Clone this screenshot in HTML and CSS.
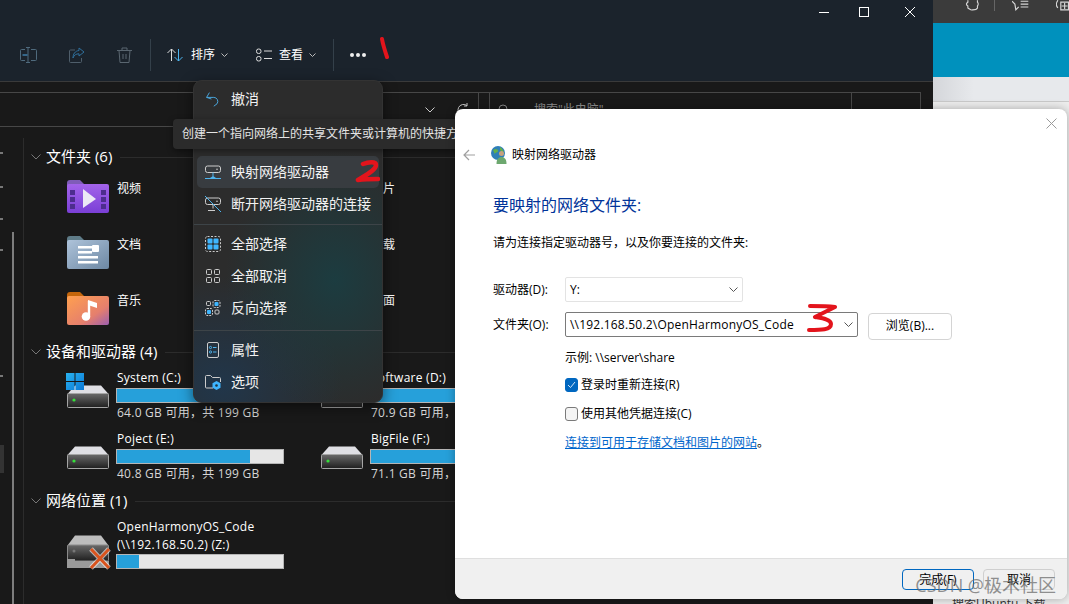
FILE: index.html
```html
<!DOCTYPE html>
<html lang="zh-CN">
<head>
    <meta charset="UTF-8">
    <meta name="viewport" content="width=device-width, initial-scale=1.0">
    <title>映射网络驱动器</title>
    <link rel="stylesheet" href="styles.css">
</head>
<body>
    <!-- shared icons -->
    <svg class="sprite" width="0" height="0">
        <defs>
            <linearGradient id="gVideo" x1="0" y1="0" x2="0" y2="1"><stop offset="0" stop-color="#a364ea"/><stop offset="1" stop-color="#7a3fd6"/></linearGradient>
            <linearGradient id="gDocs" x1="0" y1="0" x2="1" y2="1"><stop offset="0" stop-color="#aec3da"/><stop offset="1" stop-color="#6d88a3"/></linearGradient>
            <linearGradient id="gMusic" x1="0" y1="0" x2="1" y2="1"><stop offset="0" stop-color="#ffa04f"/><stop offset="0.65" stop-color="#e57f6d"/><stop offset="1" stop-color="#9c5fb0"/></linearGradient>
            <linearGradient id="gDrive" x1="0" y1="0" x2="0" y2="1"><stop offset="0" stop-color="#6a6a6a"/><stop offset="1" stop-color="#1f1f1f"/></linearGradient>
            <linearGradient id="gWin" x1="0" y1="0" x2="1" y2="1"><stop offset="0" stop-color="#29b3f0"/><stop offset="1" stop-color="#0a78d6"/></linearGradient>
            <symbol id="drive" viewBox="0 0 42 23">
                <path d="M8 .5h26l7.500 8.500h-41z" fill="#dfdfe4"/>
                <rect x=".5" y="8.500" width="41" height="14" rx="1" fill="url(#gDrive)" stroke="#a5a5a5"/>
                <circle cx="7" cy="15" r="1.600" fill="#35e03a"/>
            </symbol>
        </defs>
    </svg>

    <!-- browser window behind -->
    <div class="browser">
        <div class="browser-tabs">
            <svg class="b-puzzle" width="16" height="12" viewBox="0 0 16 12"><path d="M3 0v2C1 3 1 5 3 6v2c2 1 3 3 5 2 2 0 4 0 5-2V6c1-1 1-3 0-4V0" fill="none" stroke="#d8d8d8" stroke-width="1.200"/></svg>
            <span class="b-sep"></span>
            <svg class="b-star" width="18" height="12" viewBox="0 0 18 12"><path d="M0 1l3 3 1 6 3-3M9 1h8M9 4h8M9 7h8" fill="none" stroke="#d8d8d8" stroke-width="1.200"/></svg>
            <svg class="b-add" width="14" height="12" viewBox="0 0 14 12"><path d="M2 0C0 3 0 6 2 8M5 2h8v8H5zM9 3v6M6 6h6" fill="none" stroke="#d8d8d8" stroke-width="1.200"/></svg>
        </div>
        <div class="browser-banner"></div>
        <div class="browser-nav"></div>
        <div class="browser-page"><span class="browser-clip">搜索Ubuntu 下载</span></div>
    </div>

    <!-- explorer window -->
    <div class="explorer">
        <header class="ex-head">
            <div class="win-btns">
                <svg width="10" height="10" viewBox="0 0 10 10"><path d="M0 5.500h10" stroke="#fff"/></svg>
                <svg width="10" height="10" viewBox="0 0 10 10"><rect x=".5" y=".5" width="9" height="9" fill="none" stroke="#fff"/></svg>
                <svg width="10" height="10" viewBox="0 0 10 10"><path d="M0 0l10 10M10 0L0 10" stroke="#fff"/></svg>
            </div>
            <div class="toolbar">
                <svg class="tb-icon" width="17" height="16" viewBox="0 0 17 16"><path d="M5 2.500H1.500a1 1 0 0 0-1 1v9a1 1 0 0 0 1 1H5M11 2.500h4.500a1 1 0 0 1 1 1v9a1 1 0 0 1-1 1H11M8 .5v15M6 .5h4M6 15.500h4" fill="none" stroke="#4f6a7d"/><path d="M2.500 8h5" stroke="#3f7ea8" stroke-width="1.500"/></svg>
                <svg class="tb-icon" width="16" height="16" viewBox="0 0 16 16"><path d="M6 3H1.500a1 1 0 0 0-1 1v10.500a1 1 0 0 0 1 1h10a1 1 0 0 0 1-1V11" fill="none" stroke="#4f5e6b"/><path d="M10 1l5 4-5 4V6.800C7 6.800 5 8 4 11c0-4 2-7 6-7.500z" fill="none" stroke="#2f6f9b"/></svg>
                <svg class="tb-icon tb-last" width="15" height="16" viewBox="0 0 15 16"><path d="M0 3.500h15M5 3.500V1h5v2.500M2 3.500l1 12h9l1-12M6 7v5M9 7v5" fill="none" stroke="#5a6670"/></svg>
                <span class="tb-sep"></span>
                <div class="tb-btn sort-btn">
                    <svg width="17" height="14" viewBox="0 0 17 14"><path d="M4.500 13V1M.5 5l4-4 4 4" fill="none" stroke="#dcdcdc"/><path d="M11.500 1v12M7.500 9l4 4 4-4" fill="none" stroke="#4db4ee"/></svg>
                    <span>排序</span>
                    <svg class="chev" width="7" height="4" viewBox="0 0 7 4"><path d="M.5.5l3 3 3-3" fill="none" stroke="#bbb"/></svg>
                </div>
                <div class="tb-btn view-btn">
                    <svg width="16" height="14" viewBox="0 0 16 14"><rect x=".5" y="1" width="4.500" height="4.500" rx="2" fill="none" stroke="#ddd"/><rect x=".5" y="8.500" width="4.500" height="4.500" rx="2" fill="none" stroke="#ddd"/><path d="M8 3h8M8 10.500h8" stroke="#ddd"/></svg>
                    <span>查看</span>
                    <svg class="chev" width="7" height="4" viewBox="0 0 7 4"><path d="M.5.5l3 3 3-3" fill="none" stroke="#bbb"/></svg>
                </div>
                <span class="tb-sep sep-two"></span>
                <div class="dots"><i></i><i></i><i></i></div>
            </div>
        </header>

        <div class="address-row">
            <div class="address">
                <svg class="addr-chev" width="10" height="6" viewBox="0 0 10 6"><path d="M.5.5L5 5l4.500-4.500" fill="none" stroke="#ccc"/></svg>
                <svg class="addr-refresh" width="14" height="14" viewBox="0 0 14 14"><path d="M12 7a5.500 5.500 0 1 1-2-4.300M10 0v3H7" fill="none" stroke="#ccc"/></svg>
                <span class="addr-gap"></span>
                <div class="search">
                    <svg width="12" height="12" viewBox="0 0 12 12"><circle cx="5" cy="5" r="4" fill="none" stroke="#888"/><path d="M8 8l3.500 3.500" stroke="#888"/></svg>
                    <span>搜索"此电脑"</span>
                </div>
            </div>
        </div>

        <div class="ex-main">
            <nav class="nav-pane">
                <i class="nav-tick t1"></i><i class="nav-tick t2"></i><i class="nav-tick t3"></i><i class="nav-tick t4"></i><i class="nav-tick t5"></i>
                <i class="nav-selected"></i>
                <i class="nav-scroll"></i>
            </nav>
            <main class="content">
                <section>
                    <h3 class="sec-title"><svg width="10" height="6" viewBox="0 0 10 6"><path d="M.5.5L5 5l4.500-4.500" fill="none" stroke="#777"/></svg><span>文件夹 (6)</span></h3>
                    <div class="folders">
                        <div class="folder">
                            <svg width="42" height="33" viewBox="0 0 42 33"><path d="M0 3a3 3 0 0 1 3-3h10l4 4v6H0z" fill="#7f5cb8"/><rect y="4" width="42" height="29" rx="2" fill="url(#gVideo)"/><path d="M3 10h5v5H3zM3 17h5v5H3zM3 24h5v5H3zM34 10h5v5h-5zM34 17h5v5h-5zM34 24h5v5h-5z" fill="#4d2d8e"/><path d="M16 9l13 10-13 9z" fill="#ece8f5"/></svg>
                            <span>视频</span>
                        </div>
                        <div class="folder">
                            <svg width="42" height="33" viewBox="0 0 42 33"><path d="M0 3a3 3 0 0 1 3-3h10l4 4v6H0z" fill="#eda"/></svg>
                            <span>图片</span>
                        </div>
                        <div class="folder">
                            <svg width="42" height="33" viewBox="0 0 42 33"><path d="M0 3a3 3 0 0 1 3-3h10l4 4v6H0z" fill="#5f7c88"/><rect y="4" width="42" height="29" rx="2" fill="url(#gDocs)"/><path d="M11 10h14v2.500H11zM11 15h14v2.500H11zM11 20h20v2.500H11zM11 25h20v2.500H11z" fill="#fff"/><rect x="25" y="9" width="7" height="7" rx="1" fill="#fff"/></svg>
                            <span>文档</span>
                        </div>
                        <div class="folder">
                            <svg width="42" height="33" viewBox="0 0 42 33"><path d="M0 3a3 3 0 0 1 3-3h10l4 4v6H0z" fill="#8ab"/></svg>
                            <span>下载</span>
                        </div>
                        <div class="folder">
                            <svg width="42" height="33" viewBox="0 0 42 33"><path d="M0 3a3 3 0 0 1 3-3h10l4 4v6H0z" fill="#c4660c"/><rect y="4" width="42" height="29" rx="2" fill="url(#gMusic)"/><path d="M22 9v14.500" stroke="#fff" stroke-width="2.400"/><path d="M21 8l9 3v5l-9-3z" fill="#fff"/><circle cx="19" cy="24.500" r="4.300" fill="#fff"/></svg>
                            <span>音乐</span>
                        </div>
                        <div class="folder">
                            <svg width="42" height="33" viewBox="0 0 42 33"><path d="M0 3a3 3 0 0 1 3-3h10l4 4v6H0z" fill="#8ab"/></svg>
                            <span>桌面</span>
                        </div>
                    </div>
                </section>

                <section class="sec-drives">
                    <h3 class="sec-title"><svg width="10" height="6" viewBox="0 0 10 6"><path d="M.5.5L5 5l4.500-4.500" fill="none" stroke="#777"/></svg><span>设备和驱动器 (4)</span></h3>
                    <div class="drives">
                        <div class="drive">
                            <div class="drive-icon">
                                <svg class="win-logo" width="18" height="17" viewBox="0 0 18 17"><path d="M0 0h8.500v8H0zM9.500 0H18v8H9.500zM0 9h8.500v8H0zM9.500 9H18v8H9.500z" fill="url(#gWin)"/></svg>
                                <svg width="42" height="23"><use href="#drive"/></svg>
                            </div>
                            <div class="drive-info">
                                <div class="drive-name">System (C:)</div>
                                <div class="bar"><div class="bar-fill" style="width:68%"></div></div>
                                <div class="drive-free">64.0 GB 可用，共 199 GB</div>
                            </div>
                        </div>
                        <div class="drive">
                            <div class="drive-icon"><svg width="42" height="23"><use href="#drive"/></svg></div>
                            <div class="drive-info">
                                <div class="drive-name">Software (D:)</div>
                                <div class="bar"><div class="bar-fill" style="width:64%"></div></div>
                                <div class="drive-free">70.9 GB 可用，共 199 GB</div>
                            </div>
                        </div>
                        <div class="drive">
                            <div class="drive-icon"><svg width="42" height="23"><use href="#drive"/></svg></div>
                            <div class="drive-info">
                                <div class="drive-name">Poject (E:)</div>
                                <div class="bar"><div class="bar-fill" style="width:80%"></div></div>
                                <div class="drive-free">40.8 GB 可用，共 199 GB</div>
                            </div>
                        </div>
                        <div class="drive">
                            <div class="drive-icon"><svg width="42" height="23"><use href="#drive"/></svg></div>
                            <div class="drive-info">
                                <div class="drive-name">BigFile (F:)</div>
                                <div class="bar"><div class="bar-fill" style="width:64%"></div></div>
                                <div class="drive-free">71.1 GB 可用，共 199 GB</div>
                            </div>
                        </div>
                    </div>
                </section>

                <section class="sec-network">
                    <h3 class="sec-title"><svg width="10" height="6" viewBox="0 0 10 6"><path d="M.5.5L5 5l4.500-4.500" fill="none" stroke="#777"/></svg><span>网络位置 (1)</span></h3>
                    <div class="drive net-drive">
                        <div class="drive-icon">
                            <svg width="45" height="35" viewBox="0 0 45 35"><path d="M8 .5h26l7.500 10h-41z" fill="#bdbdbd"/><rect x=".5" y="10" width="41" height="16" rx="1" fill="url(#gDrive)" stroke="#8a8a8a"/><circle cx="7" cy="16" r="1.500" fill="#777"/><path d="M0 24h8v9H0zM8 26h34v7H8z" fill="#9a9a9a"/><path d="M24 14l18 19M42 14L24 33" stroke="#fff" stroke-opacity=".6" stroke-width="5"/><path d="M24 14l18 19M42 14L24 33" stroke="#d9541e" stroke-width="3"/></svg>
                        </div>
                        <div class="drive-info">
                            <div class="drive-name">OpenHarmonyOS_Code<br>(\\192.168.50.2) (Z:)</div>
                            <div class="bar"><div class="bar-fill" style="width:13%"></div></div>
                        </div>
                    </div>
                </section>
            </main>
        </div>

        <!-- more menu -->
        <div class="menu">
            <div class="menu-item">
                <svg width="20" height="18" viewBox="0 0 20 18"><path d="M2 7h9a5 5 0 0 1 4 8l-4 3M5.500 1L2 7l6 2" fill="none" stroke="#4aa8e0" stroke-width="1.200"/></svg>
                <span>撤消</span>
            </div>
            <div class="menu-spacer"></div>
            <div class="menu-item active">
                <svg width="16" height="16" viewBox="0 0 16 16"><rect x=".5" y="2" width="15" height="6.500" rx="2" fill="none" stroke="#ccc"/><circle cx="12" cy="5.200" r=".8" fill="#ccc"/><path d="M8 8.500v4M0 14.500h16" stroke="#4db4ee"/><path d="M5 14l3-2 3 2z" fill="#4db4ee"/></svg>
                <span>映射网络驱动器</span>
            </div>
            <div class="menu-item">
                <svg width="16" height="16" viewBox="0 0 16 16"><rect x=".5" y="2" width="15" height="6.500" rx="2" fill="none" stroke="#ccc"/><circle cx="12" cy="5.200" r=".8" fill="#ccc"/><path d="M8 8.500v4M3 14.500h7" stroke="#ccc"/><path d="M0 0l16 16" stroke="#4db4ee"/></svg>
                <span>断开网络驱动器的连接</span>
            </div>
            <div class="menu-line"></div>
            <div class="menu-item">
                <svg width="16" height="16" viewBox="0 0 16 16"><rect x=".5" y=".5" width="15" height="15" rx="2" fill="none" stroke="#ccc" stroke-dasharray="2 1.500"/><rect x="2.500" y="2.500" width="5" height="5" rx="1" fill="#3fb6ff"/><rect x="8.500" y="2.500" width="5" height="5" rx="1" fill="#3fb6ff"/><rect x="2.500" y="8.500" width="5" height="5" rx="1" fill="#3fb6ff"/><rect x="8.500" y="8.500" width="5" height="5" rx="1" fill="#3fb6ff"/></svg>
                <span>全部选择</span>
            </div>
            <div class="menu-item">
                <svg width="16" height="16" viewBox="0 0 16 16"><rect x="1.500" y="1.500" width="5" height="5" rx="1" fill="none" stroke="#ccc"/><rect x="9.500" y="1.500" width="5" height="5" rx="1" fill="none" stroke="#ccc"/><rect x="1.500" y="9.500" width="5" height="5" rx="1" fill="none" stroke="#ccc"/><rect x="9.500" y="9.500" width="5" height="5" rx="1" fill="none" stroke="#ccc"/></svg>
                <span>全部取消</span>
            </div>
            <div class="menu-item">
                <svg width="16" height="16" viewBox="0 0 16 16"><rect x="1.500" y="1.500" width="4" height="4" rx="1" fill="none" stroke="#ccc"/><rect x="8" y="0.500" width="7" height="7" rx="1.500" fill="none" stroke="#ccc" stroke-dasharray="2 1"/><rect x="9.500" y="2" width="4" height="4" rx="1" fill="#3fb6ff"/><rect x=".5" y="8.500" width="7" height="7" rx="1.500" fill="none" stroke="#ccc" stroke-dasharray="2 1"/><rect x="2" y="10" width="4" height="4" rx="1" fill="#3fb6ff"/><rect x="10" y="10" width="4" height="4" rx="1" fill="none" stroke="#ccc"/></svg>
                <span>反向选择</span>
            </div>
            <div class="menu-line line-low"></div>
            <div class="menu-item">
                <svg width="16" height="16" viewBox="0 0 16 16"><rect x="2.500" y=".5" width="11" height="15" rx="1.500" fill="none" stroke="#ccc"/><circle cx="5.500" cy="5.500" r="1.100" fill="none" stroke="#4db4ee"/><circle cx="5.500" cy="10" r="1.100" fill="none" stroke="#4db4ee"/><path d="M8 5.500h3.500M8 10h3.500" stroke="#4db4ee"/></svg>
                <span>属性</span>
            </div>
            <div class="menu-item">
                <svg width="16" height="16" viewBox="0 0 16 16"><path d="M8 14H1.500a1 1 0 0 1-1-1V2.500a1 1 0 0 1 1-1h4l2 2h7a1 1 0 0 1 1 1V8" fill="none" stroke="#ccc"/><path d="M11.500 7l4 2.300v4.400l-4 2.300-4-2.300V9.300z" fill="#3fb6ff"/><circle cx="11.500" cy="11.500" r="1.300" fill="#21333c"/></svg>
                <span>选项</span>
            </div>
        </div>
        <div class="tooltip">创建一个指向网络上的共享文件夹或计算机的快捷方式</div>
    </div>

    <!-- map network drive dialog -->
    <div class="dialog">
        <div class="dlg-top">
            <svg width="11" height="11" viewBox="0 0 11 11"><path d="M.5.5l10 10M10.500.5l-10 10" stroke="#9a9a9a"/></svg>
        </div>
        <div class="dlg-title">
            <svg class="dlg-back" width="12" height="12" viewBox="0 0 12 12"><path d="M12 6H1M6 1L1 6l5 5" fill="none" stroke="#9f9f9f" stroke-width="1.200"/></svg>
            <svg class="dlg-globe" width="16" height="18" viewBox="0 0 16 18"><circle cx="7" cy="7" r="7" fill="#2f7fb8"/><path d="M2 4c3-2 5-1 5 1s-3 1-3 3 2 3 2 5M9 1c2 1 3 3 4 5-2 0-3-1-4-2z" fill="#63b04a"/><circle cx="10.500" cy="7.500" r="2.500" fill="#c9a27c"/><path d="M5.500 18c0-5 2-7 5-7s5 2 5 7z" fill="#6da86f"/></svg>
            <span>映射网络驱动器</span>
        </div>
        <div class="dlg-body">
            <h2 class="dlg-heading">要映射的网络文件夹:</h2>
            <p class="dlg-text">请为连接指定驱动器号，以及你要连接的文件夹:</p>
            <div class="form-row row-drive">
                <label class="form-label">驱动器(D):</label>
                <div class="select select-drive">
                    <span>Y:</span>
                    <svg width="9" height="5" viewBox="0 0 9 5"><path d="M.5.5l4 4 4-4" fill="none" stroke="#555"/></svg>
                </div>
            </div>
            <div class="form-row row-folder">
                <label class="form-label">文件夹(O):</label>
                <div class="select select-folder">
                    <span class="path-text">\\192.168.50.2\OpenHarmonyOS_Code</span>
                    <svg width="9" height="5" viewBox="0 0 9 5"><path d="M.5.5l4 4 4-4" fill="none" stroke="#555"/></svg>
                </div>
                <button class="btn btn-browse">浏览(B)...</button>
            </div>
            <div class="form-indent">
                <div class="example">示例: \\server\share</div>
                <div class="check-row">
                    <span class="check checked"><svg width="9" height="8" viewBox="0 0 9 8"><path d="M1 4l2.500 2.500L8 1" fill="none" stroke="#cfe4f7"/></svg></span>
                    <span>登录时重新连接(R)</span>
                </div>
                <div class="check-row second">
                    <span class="check"></span>
                    <span>使用其他凭据连接(C)</span>
                </div>
                <div class="link-row"><a class="link">连接到可用于存储文档和图片的网站</a>。</div>
            </div>
        </div>
        <div class="dlg-foot">
            <button class="btn btn-primary">完成(F)</button>
            <button class="btn">取消</button>
        </div>
        <div class="watermark">CSDN @极术社区</div>
    </div>

    <!-- red pen marks on top of the screenshot -->
    <svg class="pen pen-one" width="10" height="22" viewBox="0 0 10 22"><path d="M3 2c1 6 3 12 5 18" fill="none" stroke="#e3141c" stroke-width="4" stroke-linecap="round"/></svg>
    <svg class="pen pen-two" width="26" height="24" viewBox="0 0 26 24"><path d="M9 4c5-2 13-3 13 1 0 5-10 10-18 15 7-1 14-1 20-1" fill="none" stroke="#e3141c" stroke-width="4.500" stroke-linecap="round" stroke-linejoin="round"/></svg>
    <svg class="pen pen-three" width="30" height="32" viewBox="0 0 30 32"><path d="M3 4c8 0 17 0 25 1-6 3-14 7-20 10 6 1 16 2 16 7 0 6-10 6-22 6" fill="none" stroke="#e3141c" stroke-width="4" stroke-linecap="round" stroke-linejoin="round"/></svg>
</body>
</html>
```
FILE: styles.css
```css
* {
    box-sizing: border-box;
}

html, body {
    width: 1069px;
    height: 604px;
    margin: 0;
    overflow: hidden;
}

body {
    position: relative;
    background-color: #191919;
    font-family: "Open Sans", "Noto Sans CJK SC", sans-serif;
    font-size: 12px;
    line-height: 18px;
}

.sprite {
    position: absolute;
}

/* browser behind */
.browser {
    position: absolute;
    left: 933px;
    top: 0;
    right: 0;
    bottom: 0;
    display: flex;
    flex-direction: column;
    background-color: #ededed;
}

.browser-tabs {
    height: 23px;
    background-color: #3b3b3b;
    display: flex;
    align-items: flex-start;
    padding-left: 32px;
    gap: 14px;
}

.b-sep {
    width: 1px;
    height: 11px;
    background-color: #666;
}

.b-star {
    margin-left: 3px;
}

.b-add {
    margin-left: 12px;
}

.browser-banner {
    height: 54px;
    background-color: #0091bd;
}

.browser-nav {
    height: 25px;
    background: linear-gradient(90deg, #d4d6da, #e7e9ec 30%);
    border-bottom: 1px solid #c9c9c9;
}

.browser-page {
    flex: 1;
    position: relative;
}

.browser-clip {
    position: absolute;
    left: 19px;
    bottom: -9px;
    color: #333;
}

/* explorer */
.explorer {
    position: absolute;
    left: 0;
    top: 0;
    width: 933px;
    height: 604px;
    display: flex;
    flex-direction: column;
    background-color: #191919;
    color: #fff;
}

.ex-head {
    height: 82px;
    background-color: #1b232c;
    border-bottom: 1px solid #3a3a3a;
    padding-top: 7px;
}

.win-btns {
    display: flex;
    justify-content: flex-end;
    padding-right: 18px;
    gap: 30px;
}

.win-btns svg:nth-child(3) {
    margin-left: 6px;
}

.toolbar {
    display: flex;
    align-items: center;
    height: 32px;
    margin-top: 22px;
    padding-left: 20px;
}

.tb-icon {
    margin-right: 32px;
}

.tb-icon.tb-last {
    margin-right: 17px;
}

.tb-sep {
    width: 1px;
    height: 32px;
    background-color: #34404a;
    margin-left: 1px;
}

.tb-btn {
    display: flex;
    align-items: center;
    gap: 7px;
}

.tb-btn .chev {
    margin-left: -1px;
}

.sort-btn {
    margin-left: 16px;
}

.view-btn {
    margin-left: 28px;
}

.sep-two {
    margin-left: 17px;
}

.dots {
    display: flex;
    gap: 2px;
    margin-left: 16px;
}

.dots i {
    width: 4px;
    height: 4px;
    border-radius: 50%;
    background-color: #eee;
}

.address-row {
    height: 45px;
    padding: 10px 12px 0 0;
}

.address {
    height: 35px;
    border: 1px solid #474747;
    border-left: none;
    display: flex;
    align-items: center;
    padding-left: 425px;
}

.addr-refresh {
    margin-left: 22px;
}

.addr-gap {
    width: 1px;
    height: 33px;
    background-color: #474747;
    margin-left: 7px;
}

.search {
    width: 363px;
    height: 33px;
    margin-left: 10px;
    border-left: 1px solid #474747;
    border-right: 1px solid #474747;
    display: flex;
    align-items: center;
    gap: 24px;
    padding-left: 8px;
    color: #8c8c8c;
}

.ex-main {
    flex: 1;
    display: flex;
    min-height: 0;
}

.nav-pane {
    width: 24px;
    position: relative;
    border-right: 1px solid #2c2c2c;
    margin-top: 11px;
}

.nav-tick {
    position: absolute;
    left: 0;
    width: 3px;
    height: 2px;
    background-color: #777;
}

.t1 { top: 14px; }
.t2 { top: 48px; }
.t3 { top: 80px; }
.t4 { top: 111px; }
.t5 { top: 237px; }

.nav-selected {
    position: absolute;
    left: 0;
    top: 307px;
    width: 4px;
    height: 28px;
    background-color: #333;
}

.nav-scroll {
    position: absolute;
    left: 12px;
    top: 94px;
    bottom: 0;
    width: 2px;
    background-color: #7d7d7d;
}

.content {
    flex: 1;
    padding: 20px 0 0 7px;
    min-width: 0;
}

.sec-title {
    display: flex;
    align-items: center;
    height: 20px;
    margin: 0;
    font-size: 15px;
    font-weight: normal;
    color: #fff;
}

.sec-title span {
    margin-top: -2px;
}

.sec-title svg {
    margin-right: 5px;
}

.sec-title::after {
    content: "";
    flex: 1;
    height: 1px;
    margin-left: 8px;
    background-color: #2c2c2c;
}

.folders {
    display: grid;
    grid-template-columns: 254px 254px;
    padding-left: 36px;
    margin-top: 5px;
}

.folder {
    height: 56px;
    display: flex;
    gap: 8px;
    padding-top: 8px;
    align-items: flex-start;
}

.sec-drives {
    margin-top: 2px;
}

.drives {
    display: grid;
    grid-template-columns: 254px 254px;
    grid-auto-rows: 61px;
    padding-left: 36px;
    margin-top: 8px;
}

.drive {
    display: flex;
    gap: 8px;
    align-items: flex-start;
}

.drive-icon {
    width: 42px;
    height: 38px;
    position: relative;
    padding-top: 15px;
    flex-shrink: 0;
}

.drive-icon svg {
    display: block;
}

.win-logo {
    position: absolute;
    left: -1px;
    top: 3px;
    z-index: 1;
}

.drive-info {
    width: 168px;
    margin-left: -1px;
}

.drive-name {
    line-height: 16px;
    margin-left: 1px;
    letter-spacing: 0.25px;
}

.bar {
    width: 168px;
    height: 15px;
    margin-top: 2px;
    background-color: #e6e6e6;
    border: 1px solid #b5b5b5;
}

.bar-fill {
    height: 100%;
    background-color: #26a0da;
}

.drive-free {
    margin-left: 1px;
    margin-top: 1px;
    color: #d6d6d6;
    letter-spacing: 0.25px;
    white-space: nowrap;
}

.sec-network {
    margin-top: -1px;
}

.net-drive {
    margin: 7px 0 0 36px;
}

.net-drive .drive-icon {
    padding-top: 17px;
}

.net-drive .drive-name {
    line-height: 18px;
}

.net-drive .bar {
    margin-top: 0;
}

/* more menu and its tooltip */
.menu {
    position: absolute;
    left: 193px;
    top: 80px;
    width: 190px;
    height: 323px;
    padding: 2px 3px;
    border-radius: 9px;
    border: 1px solid #333;
    background:
        radial-gradient(ellipse 110px 130px at 75% 62%, #1c3c40, transparent),
        radial-gradient(ellipse 120px 110px at 15% 95%, #21364a, transparent),
        #2c2c2c;
    box-shadow: 0 4px 14px rgba(0, 0, 0, 0.5);
}

.menu-item {
    height: 32px;
    display: flex;
    align-items: center;
    gap: 10px;
    padding-left: 8px;
    border-radius: 5px;
    font-size: 14px;
    color: #f2f2f2;
    white-space: nowrap;
}

.menu-item svg {
    flex-shrink: 0;
    width: 16px;
}

.menu-item.active {
    background-color: #383c40;
}

.menu-spacer {
    height: 41px;
}

.menu-line {
    height: 1px;
    margin: 4px -3px 3px;
    background-color: #3d4448;
}

.menu-line.line-low {
    margin: 6px -3px 3px;
}

.tooltip {
    position: absolute;
    left: 173px;
    top: 119px;
    width: 320px;
    height: 30px;
    padding: 0 9px;
    border-radius: 4px;
    background-color: #2b2b2b;
    box-shadow: 0 2px 6px rgba(0, 0, 0, 0.4);
    line-height: 29px;
    white-space: nowrap;
    color: #e4e4e4;
}

/* dialog */
.dialog {
    position: absolute;
    left: 455px;
    top: 109px;
    width: 612px;
    height: 490px;
    display: flex;
    flex-direction: column;
    border-radius: 8px;
    background-color: #fff;
    color: #000;
    box-shadow: 0 0 10px rgba(0, 0, 0, 0.3);
    overflow: hidden;
}

.dlg-top {
    height: 28px;
    display: flex;
    align-items: center;
    justify-content: flex-end;
    padding-right: 10px;
}

.dlg-title {
    height: 32px;
    margin-top: 2px;
    display: flex;
    align-items: center;
    padding-left: 8px;
}

.dlg-globe {
    margin: 0 5px 0 16px;
}

.dlg-body {
    padding-left: 38px;
}

.dlg-heading {
    margin: 23px 0 0;
    font-size: 16px;
    line-height: 22px;
    font-weight: normal;
    color: #003399;
}

.dlg-text {
    margin: 18px 0 0;
}

.form-row {
    display: flex;
    align-items: flex-start;
}

.row-drive {
    margin-top: 25px;
}

.row-folder {
    margin-top: 9px;
}

.form-label {
    width: 72px;
    line-height: 26px;
}

.select {
    height: 25px;
    display: flex;
    align-items: center;
    justify-content: space-between;
    padding: 0 4px;
    border: 1px solid #e3e3e3;
    border-radius: 2px;
}

.select svg {
    margin-bottom: 1px;
}

.select-drive {
    width: 178px;
}

.select-folder {
    width: 293px;
    border-color: #7a7a7a;
}

.path-text {
    letter-spacing: 0.2px;
}

.btn {
    height: 21px;
    width: 72px;
    padding: 0;
    font: inherit;
    line-height: 18px;
    background-color: transparent;
    border: 1px solid #cfcfcf;
    border-radius: 4px;
    color: #000;
}

.btn-browse {
    width: 84px;
    height: 27px;
    margin: 1px 0 0 10px;
    padding-bottom: 2px;
    background-color: #fff;
    border-color: #d4d4d4;
}

.btn-primary {
    border-color: #0067c0;
}

.form-indent {
    padding-left: 72px;
}

.example {
    margin-top: 9px;
}

.check-row {
    display: flex;
    align-items: center;
    gap: 3px;
    margin-top: 9px;
}

.check-row.second {
    margin-top: 11px;
}

.check {
    width: 13px;
    height: 14px;
    display: flex;
    align-items: center;
    justify-content: center;
    border: 1px solid #7a7a7a;
    border-radius: 3px;
    background-color: #f4f4f4;
}

.check.checked {
    background-color: #0067c0;
    border-color: #0067c0;
}

.link-row {
    margin-top: 11px;
}

.link {
    color: #0066cc;
    text-decoration: underline;
}

.dlg-foot {
    margin-top: auto;
    height: 41px;
    display: flex;
    justify-content: flex-end;
    gap: 9px;
    padding: 10px 12px 0 0;
    background-color: #f0f0f0;
    border-top: 1px solid #dfdfdf;
}

.watermark {
    position: absolute;
    right: 11px;
    bottom: 3px;
    font-size: 18px;
    line-height: 22px;
    color: rgba(110, 110, 110, 0.75);
}

/* red pen marks */
.pen {
    position: absolute;
}

.pen-one {
    left: 379px;
    top: 37px;
}

.pen-two {
    left: 354px;
    top: 160px;
}

.pen-three {
    left: 807px;
    top: 302px;
}
```
